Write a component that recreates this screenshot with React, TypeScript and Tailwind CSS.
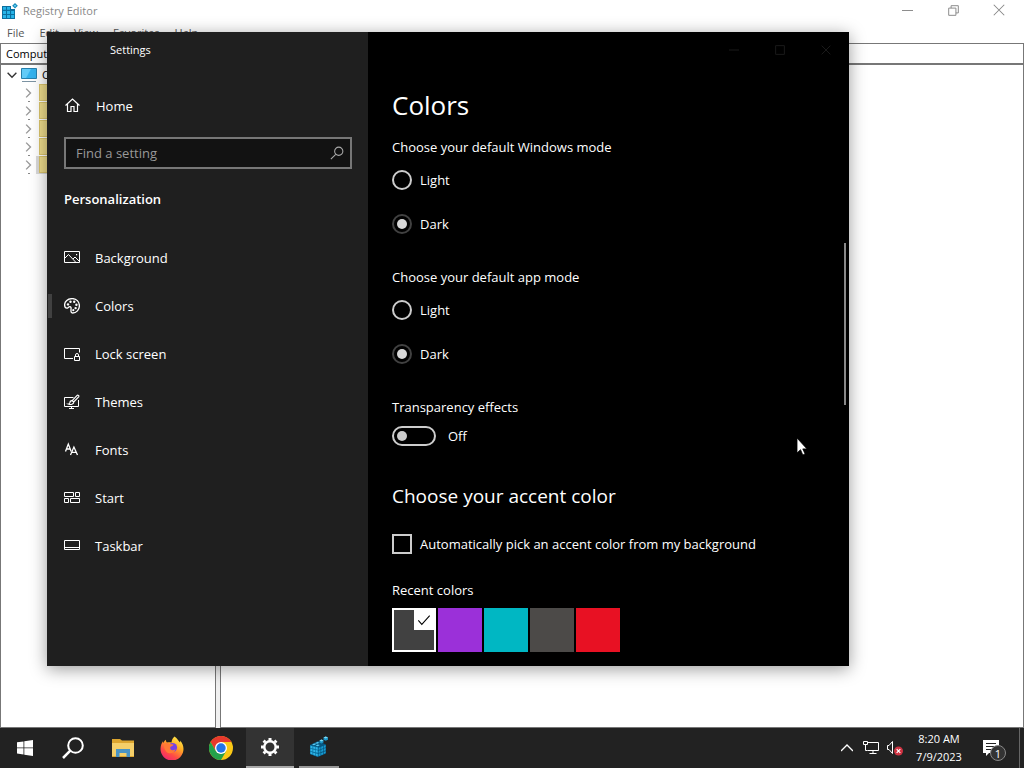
import { useState } from 'react'
import type { ReactNode } from 'react'

function Icon({ children, className = 'size-4' }: { children: ReactNode; className?: string }) {
  return (
    <svg
      viewBox="0 0 16 16"
      className={className}
      fill="none"
      stroke="currentColor"
      strokeWidth="1"
      aria-hidden="true"
    >
      {children}
    </svg>
  )
}

const navItems = [
  {
    label: 'Background',
    icon: (
      <>
        <path d="M.5 1.500h15v11H.5z" />
        <path d="M.5 8.500l4-4 7.500 8M9 9l2-2 4.500 4.500" />
        <path d="M12 4h1.200v1.200H12z" fill="currentColor" stroke="none" />
      </>
    ),
  },
  {
    label: 'Colors',
    icon: (
      <>
        <path
          d="M8.200.6C3.800.6.6 3.400.6 6.800c0 2 1 3.300 2.200 3.300 1.300 0 1.700-1.400 3-1.400 1.500 0 1.300 1.500 1.200 3-.1 1.700-.1 3.300 1.700 3.300 3.700 0 6.700-3.200 6.700-7.300S12.400.6 8.200.6z"
          strokeWidth="1.300"
        />
        <g fill="currentColor" stroke="none">
          <circle cx="4" cy="6.400" r="1.200" />
          <circle cx="6.500" cy="3.700" r="1.200" />
          <circle cx="10.200" cy="3.700" r="1.200" />
          <circle cx="12.400" cy="6.700" r="1.200" />
          <circle cx="11.600" cy="10.100" r="1.200" />
          <circle cx="9.300" cy="12.200" r="1.100" />
        </g>
      </>
    ),
  },
  {
    label: 'Lock screen',
    icon: (
      <>
        <path d="M9 12.500H.5v-10h15v4" />
        <path d="M10.500 10.500h5v4h-5z" />
        <path d="M11.500 10.500V9a1.500 1.500 0 0 1 3 0v1.500" />
      </>
    ),
  },
  {
    label: 'Themes',
    icon: (
      <>
        <path d="M9.500 3.500h-9v9h14V6M7.500 12.500v2M5 14.500h5" />
        <path
          d="M14.200 1.200c.8.300.9 1 .4 1.600L9.800 8 8.200 6.600l4.700-5c.4-.4.9-.6 1.300-.4zM8.200 6.700c-1.700-.2-2.200 1-2.300 2-.1.800-.7 1.200-1.600 1.300 2.600 1.100 5.400.3 5.500-2z"
          strokeWidth="1.200"
        />
      </>
    ),
  },
  {
    label: 'Fonts',
    icon: (
      <g strokeWidth="1.300">
        <path d="M1.500 9.500L4.300 2l2.900 7.500M2.500 7h3.600" />
        <path d="M6.500 13L9.900 5l3.600 8M7.800 10.300h4.400" />
      </g>
    ),
  },
  {
    label: 'Start',
    icon: (
      <>
        <path d="M.5 2.500h9v4h-9zM11.500 2.500h4v4h-4zM.5 8.500h4v4h-4zM6.500 8.500h9v4h-9z" />
      </>
    ),
  },
  {
    label: 'Taskbar',
    icon: (
      <>
        <path d="M.5 2.500h15v9H.5zM.5 9.500h15" />
      </>
    ),
  },
]

const recentColors = [
  { name: 'Dark gray', className: 'bg-[#414141]' },
  { name: 'Purple', className: 'bg-[#9b30d9]' },
  { name: 'Teal', className: 'bg-[#00b7c3]' },
  { name: 'Gray', className: 'bg-[#4c4a48]' },
  { name: 'Red', className: 'bg-[#e81123]' },
]

function RegistryIcon({ className }: { className: string }) {
  return (
    <svg viewBox="0 0 16 16" className={className} aria-hidden="true">
      <path d="M0 3h9v3h4v10H0z" fill="#0b6f9f" />
      <path
        d="M1 4h3v2.800H1zM5 4h3v2.800H5zM1 7.900h3v3H1zM5 7.900h3v3H5zM9.100 7.900h3v3h-3zM1 12h3v3H1zM5 12h3v3H5zM9.100 12h3v3h-3z"
        fill="#27b4e8"
      />
      <path d="M13 0l2.800 2.800L13 5.600l-2.800-2.800z" fill="#1487b8" />
      <path d="M13 1.500l1.300 1.300L13 4.100l-1.300-1.300z" fill="#63d2f5" />
    </svg>
  )
}

// larger cube version, used on the taskbar
function RegistryCube() {
  return (
    <svg viewBox="0 0 20 22" className="h-[22px] w-5" aria-hidden="true">
      <path d="M1 9l8-4 8 3.500v9L9 21l-8-3z" fill="#075680" />
      <path d="M1 9l8 2v10l-8-3z" fill="#0a709f" />
      <g fill="#2fb4e6">
        <path d="M1.500 9.800l2 .5v2.200l-2-.5zM4.200 10.400l2 .5v2.200l-2-.5zM6.800 11l1.900.5v2.200l-1.900-.5z" />
        <path d="M1.500 12.800l2 .5v2.200l-2-.5zM4.200 13.500l2 .5v2.200l-2-.5zM6.800 14.100l1.900.5v2.200l-1.900-.5z" />
        <path d="M1.500 15.800l2 .6v2l-2-.7zM4.200 16.700l2 .5v2.200l-2-.7zM6.800 17.400l1.900.5v2.300l-1.900-.7z" />
      </g>
      <g fill="#189bd0">
        <path d="M9.600 11.700l1.900-.7v2.200l-1.900.7zM12.200 10.800l1.900-.7v2.200l-1.900.7zM14.800 9.800l1.800-.7v2.200l-1.800.7z" />
        <path d="M9.600 14.700l1.900-.7v2.200l-1.900.7zM12.200 13.800l1.900-.7v2.200l-1.900.7zM14.800 12.800l1.800-.7v2.200l-1.800.7z" />
        <path d="M9.600 17.800l1.900-.7v2.300l-1.900.8zM12.200 16.900l1.900-.7v2.200l-1.900.7zM14.800 15.900l1.800-.7v1.900l-1.800.8z" />
        <path d="M3 8.600l2.200-1.100 2 .6L5 9.200zM6 7.200l2.500-1.100 2 .6-2.300 1.100zM6.500 9.600l2.300-1.100 2 .6-2 1.200z" fill="#5ccdf3" />
      </g>
      <path d="M10.500 4.500l2-1 2 1v2l-2 1-2-1z" fill="#1b94c6" />
      <path d="M10.500 4.500l2-1 2 1-2 1z" fill="#7ddcf8" />
      <path d="M14.500 1.500l2.200-1 2.300 1v2.300l-2.300 1-2.200-1z" fill="#1b94c6" />
      <path d="M14.500 1.500l2.200-1 2.300 1-2.300 1z" fill="#7ddcf8" />
    </svg>
  )
}

function RadioGroup({ title, name }: { title: string; name: string }) {
  return (
    <fieldset className="text-[13px] leading-5">
      <legend>{title}</legend>
      {['Light', 'Dark'].map((mode) => (
        <label key={mode} className="mt-[13px] flex w-fit items-center gap-2 last:mt-6">
          <input
            type="radio"
            name={name}
            defaultChecked={mode === 'Dark'}
            className="grid size-5 appearance-none place-items-center rounded-full border-2 border-[#ccc] before:size-[10px] before:rounded-full checked:border-[#414141] checked:before:bg-[#d8d8d8]"
          />
          {mode}
        </label>
      ))}
    </fieldset>
  )
}

function RegistryEditor() {
  return (
    <section className="flex min-h-0 flex-1 flex-col bg-white text-[11px] text-black" aria-label="Registry Editor">
      <header className="flex h-6 shrink-0 items-center pb-[2px] text-[#888]">
        <RegistryIcon className="ml-[2px] size-4" />
        <span className="ml-[5px] flex-1">Registry Editor</span>
        <div className="flex items-center pr-[2px] pb-[2px]">
          <button aria-label="Minimize" className="grid w-[45px] place-items-center">
            <Icon className="size-[11px]">
              <path d="M0 8h16" strokeWidth="1.400" />
            </Icon>
          </button>
          <button aria-label="Restore" className="grid w-[46px] place-items-center">
            <Icon className="size-[11px]">
              <path d="M1 4.500h10.500V15H1zM4.500 4.500V1H15v10.500h-3.500" strokeWidth="1.400" />
            </Icon>
          </button>
          <button aria-label="Close" className="grid w-[46px] place-items-center">
            <Icon className="size-3">
              <path d="M1 1l14 14M15 1L1 15" strokeWidth="1.400" />
            </Icon>
          </button>
        </div>
      </header>
      <nav className="flex h-[19px] shrink-0 items-center gap-[15px] pl-[7px] text-[#555]">
        <button>File</button>
        <button>Edit</button>
        <button>View</button>
        <button>Favorites</button>
        <button>Help</button>
      </nav>
      <input
        aria-label="Address"
        defaultValue="Computer"
        className="h-[21px] w-full shrink-0 border border-[#777] px-[5px] outline-none"
      />
      <div className="flex min-h-0 flex-1 bg-[#f0f0f0]">
        <ul className="w-[216px] border border-[#777] bg-white pt-px">
          <li className="flex h-[18px] items-center">
            <Icon className="ml-[6px] size-[10px] text-[#333]">
              <path d="M1 4.500l7 7 7-7" strokeWidth="2.200" />
            </Icon>
            <svg viewBox="0 0 16 14" className="ml-1 h-[14px] w-4" aria-hidden="true">
              <path d="M.5.5h15v10H.5z" fill="#35b3ee" stroke="#2780ad" />
              <path d="M1 1h9l-5 9H1z" fill="#63cbf7" />
              <path d="M1 13.500h14" stroke="#7c93a3" />
            </svg>
            <span className="ml-[5px]">Computer</span>
          </li>
          {[0, 1, 2, 3, 4].map((row) => (
            <li key={row} className="flex h-[18px] items-center">
              <div className="ml-[22px] flex h-full w-[13px] items-center bg-[radial-gradient(circle,#888_1px,transparent_1px)] bg-[length:2px_18px] bg-[position:5px_9px] bg-no-repeat">
                <Icon className="size-[10px] text-[#999]">
                  <path d="M5 1l7 7-7 7" strokeWidth="2.200" />
                </Icon>
              </div>
              <span className={row === 4 ? 'h-full bg-[#d9d9d9] pl-[3px]' : 'h-full pl-[3px]'}>
                <span className="block h-[17px] w-5 border border-[#dac46c] bg-[#eedc8b]" />
              </span>
            </li>
          ))}
        </ul>
        <div className="ml-1 flex-1 border border-[#777] bg-white" />
      </div>
    </section>
  )
}

function Sidebar() {
  return (
    <aside className="flex w-[321px] shrink-0 flex-col bg-[#1f1f1f] text-[13px] leading-5">
      <header className="flex h-9 items-center pl-[63px] text-[11px]">Settings</header>
      <a href="#home" className="mt-[14px] flex h-12 items-center gap-4 pl-[17px]">
        <Icon>
          <path d="M1.500 7.500l7-6.500 7 6.500M3.500 6v7.500H7v-5h3v5h3.500V6" strokeWidth="1.200" />
        </Icon>
        Home
      </a>
      <label className="mx-[17px] mt-[7px] mr-4 flex h-8 items-center border-2 border-[#777] bg-[#121212]">
        <input
          type="search"
          aria-label="Find a setting"
          placeholder="Find a setting"
          className="h-full min-w-0 flex-1 bg-transparent pl-[10px] outline-none placeholder:text-[#999]"
        />
        <Icon className="mr-[6px] size-[14px] text-[#aaa]">
          <circle cx="10" cy="6" r="4.700" strokeWidth="1.200" />
          <path d="M6.500 9.500L1 15" strokeWidth="1.200" />
        </Icon>
      </label>
      <h2 className="mt-5 pl-[17px] font-semibold">Personalization</h2>
      <nav className="mt-[25px]">
        {navItems.map((item) => (
          <a
            key={item.label}
            href={'#' + item.label}
            className="flex h-12 items-center pl-[1px]"
          >
            <span className={item.label === 'Colors' ? 'h-6 w-1 bg-[#414141]' : 'h-6 w-1'} />
            <Icon className="mr-[15px] ml-3 size-4">{item.icon}</Icon>
            {item.label}
          </a>
        ))}
      </nav>
    </aside>
  )
}

function SettingsWindow() {
  const [accent, setAccent] = useState('Dark gray')
  const [transparency, setTransparency] = useState(false)

  return (
    <section
      aria-label="Settings"
      className="absolute top-8 left-[47px] flex h-[634px] w-[802px] bg-black text-white shadow-[0_3px_16px_rgba(0,0,0,0.4)]"
    >
      <Sidebar />
      <main className="flex-1 pl-6 text-[13px] leading-5">
        <div className="flex h-9 items-center justify-end text-[#1a1a1a]">
          <button aria-label="Minimize" className="grid w-[46px] place-items-center">
            <Icon className="size-[10px]">
              <path d="M0 8h16" strokeWidth="1.600" />
            </Icon>
          </button>
          <button aria-label="Maximize" className="grid w-[46px] place-items-center">
            <Icon className="size-[10px]">
              <path d="M1 1h14v14H1z" strokeWidth="1.600" />
            </Icon>
          </button>
          <button aria-label="Close" className="grid w-[46px] place-items-center">
            <Icon className="size-[10px]">
              <path d="M1 1l14 14M15 1L1 15" strokeWidth="1.600" />
            </Icon>
          </button>
        </div>
        <h1 className="mt-[17px] mb-3 text-[26px] leading-10">Colors</h1>
        <RadioGroup title="Choose your default Windows mode" name="windows-mode" />
        <div className="mt-[33px]">
          <RadioGroup title="Choose your default app mode" name="app-mode" />
        </div>
        <p className="mt-[33px]">Transparency effects</p>
        <label className="mt-[9px] flex w-fit items-center gap-3">
          <input
            type="checkbox"
            role="switch"
            aria-label="Transparency effects"
            checked={transparency}
            onChange={(e) => setTransparency(e.target.checked)}
            className="flex h-5 w-11 appearance-none items-center rounded-full border-2 border-[#ccc] px-[3px] before:size-[10px] before:rounded-full before:bg-[#ccc] checked:justify-end"
          />
          {transparency ? 'On' : 'Off'}
        </label>
        <h2 className="mt-9 text-[19px] leading-7">Choose your accent color</h2>
        <label className="mt-6 flex w-fit items-center gap-2">
          <input
            type="checkbox"
            className="size-5 appearance-none border-2 border-[#ccc] checked:bg-[#414141]"
          />
          Automatically pick an accent color from my background
        </label>
        <h3 className="mt-[26px]">Recent colors</h3>
        <div className="mt-2 flex gap-[2px]">
          {recentColors.map((color) => (
            <button
              key={color.name}
              aria-label={color.name}
              aria-pressed={accent === color.name}
              onClick={() => setAccent(color.name)}
              className={
                'flex size-11 items-start justify-end aria-pressed:border-2 aria-pressed:border-white ' +
                color.className
              }
            >
              {accent === color.name && (
                <span className="grid size-5 place-items-center bg-white text-black">
                  <Icon className="size-[14px]">
                    <path d="M1.500 8.500l4 4.500L14.500 3" strokeWidth="1.200" />
                  </Icon>
                </span>
              )}
            </button>
          ))}
        </div>
      </main>
      <div className="absolute top-[211px] right-[3px] h-[162px] w-[2px] bg-[#888]" />
    </section>
  )
}

function Gear() {
  return (
    <svg viewBox="0 0 20 20" className="size-5" fill="none" stroke="#fff" aria-hidden="true">
      <circle cx="10" cy="10" r="5.700" strokeWidth="2.400" />
      <path
        d="M10 1v3M10 16v3M1 10h3M16 10h3M3.600 3.600l1.600 1.600M14.800 14.800l1.600 1.600M16.400 3.600l-1.600 1.600M5.200 14.800l-1.600 1.600"
        strokeWidth="3"
      />
    </svg>
  )
}

function Firefox() {
  return (
    <svg viewBox="0 0 24 24" className="size-6" aria-hidden="true">
      <defs>
        <linearGradient id="fox" x1="0.800" y1="0" x2="0.200" y2="1">
          <stop offset="0" stopColor="#fff14f" />
          <stop offset="0.350" stopColor="#ffad24" />
          <stop offset="0.700" stopColor="#ff4b45" />
          <stop offset="1" stopColor="#ec2276" />
        </linearGradient>
      </defs>
      <path
        d="M14.500.5c3 2 3.500 4 5.500 6 .3-.7.300-1.200.2-1.900 2.100 2.400 3.300 5.400 3.300 8.400A11.500 11.500 0 0 1 .5 13C.5 9.700 1.600 7 3 5.200c0 .700.1 1.300.4 1.700.7-1.600 1.500-2.500 2.400-3.200 0 1.200.5 2.100 1.200 2.700 1.400-.4 3-.3 4.500.2.200-2.500 1.300-4.800 3-6.100z"
        fill="url(#fox)"
      />
      <circle cx="12.500" cy="11.500" r="4.600" fill="#7542e5" />
      <path
        d="M4.500 7.500c2-.9 4-.5 5.500.5l3.500.5c-.2 1.600-2.300 1.700-3.200 2.500-.8 2.900 2.400 4.500 5.200 2.300-1 4.300-6.500 5.200-9.200 2.400C4.200 13.500 3.500 10.200 4.500 7.500z"
        fill="#ff7a35"
      />
    </svg>
  )
}

function Chrome() {
  return (
    <svg viewBox="0 0 24 24" className="size-6" aria-hidden="true">
      <circle cx="12" cy="12" r="12" fill="#fbc816" />
      <path d="M12 6h10.400A12 12 0 0 0 1.600 6l5.200 9z" fill="#e8392d" />
      <path d="M1.600 6A12 12 0 0 0 12 24l5.200-9-5.200 3-5.200-3z" fill="#24a14b" />
      <circle cx="12" cy="12" r="6" fill="#fff" />
      <circle cx="12" cy="12" r="4.700" fill="#2475e8" />
    </svg>
  )
}

function Taskbar() {
  return (
    <footer className="flex h-10 shrink-0 items-stretch bg-[#222] text-white">
      <div className="flex flex-1 gap-px pl-px">
        <button aria-label="Start" className="grid w-12 place-items-center">
          <svg viewBox="0 0 16 16" className="size-4" fill="#fff" aria-hidden="true">
            <path d="M0 2.300L6.500 1.400v6.100H0zM7.300 1.300L16 0v7.500H7.300zM0 8.300h6.500v6.200L0 13.600zM7.300 8.300H16V16l-8.700-1.300z" />
          </svg>
        </button>
        <button aria-label="Search" className="grid w-12 place-items-center pr-[3px]">
          <svg viewBox="0 0 22 22" className="size-[22px]" fill="none" stroke="#fff" strokeWidth="2" aria-hidden="true">
            <circle cx="13.500" cy="8.500" r="7.300" />
            <path d="M8.300 13.700L1 21" strokeWidth="2.500" />
          </svg>
        </button>
        <button aria-label="File Explorer" className="grid w-12 place-items-center">
          <svg viewBox="0 0 22 18" className="h-[18px] w-[22px]" aria-hidden="true">
            <path d="M0 0h8l2 1.500h12V18H0z" fill="#dca52f" />
            <path d="M0 4h22v13H0z" fill="#f5cf69" />
            <path d="M4 10h14v8h-3.500v-4h-7v4H4z" fill="#4a94c4" />
          </svg>
        </button>
        <button aria-label="Firefox" className="grid w-12 place-items-center">
          <Firefox />
        </button>
        <button aria-label="Chrome" className="grid w-12 place-items-center">
          <Chrome />
        </button>
        <button
          aria-label="Settings"
          className="grid w-12 place-items-center border-b-2 border-[#aaa] bg-[#333]"
        >
          <Gear />
        </button>
        <button aria-label="Registry Editor" className="grid w-12 place-items-center px-1">
          <span className="grid h-10 w-10 place-items-center border-b-2 border-[#999]">
            <RegistryCube />
          </span>
        </button>
      </div>
      <div className="flex items-center">
        <button aria-label="Show hidden icons" className="grid w-6 place-items-center">
          <Icon className="size-3">
            <path d="M0 12l8-8 8 8" strokeWidth="1.800" />
          </Icon>
        </button>
        <button aria-label="Network" className="grid w-6 place-items-center">
          <Icon>
            <path d="M4.500 2.500h11v8h-11M10 10.500v3M6.500 13.500h7M.5 1.500h4v3h-4zM2.500 4.500v6h2" />
          </Icon>
        </button>
        <button aria-label="Volume muted" className="grid w-6 place-items-center">
          <Icon>
            <path d="M.5 5.500H2l3.500-4v12L2 9.500H.5z" />
            <circle cx="11.500" cy="11" r="4.500" fill="#cf3342" stroke="none" />
            <path d="M9.700 9.200l3.600 3.600M13.300 9.200l-3.600 3.600" strokeWidth="1.200" />
          </Icon>
        </button>
        <time className="w-16 text-center text-[11px] leading-[18px]">
          8:20 AM
          <br />
          7/9/2023
        </time>
        <button aria-label="1 notification" className="relative grid w-10 place-items-center">
          <Icon>
            <path d="M0 0h16v13H6l-3 3v-3H0z" fill="#fff" stroke="none" />
            <path d="M3 3.500h10M3 6.500h10M3 9.500h7" stroke="#222" />
          </Icon>
          <span className="absolute top-[5px] left-[19px] grid size-4 place-items-center rounded-full border border-[#888] bg-[#333] text-[11px] leading-none">
            1
          </span>
        </button>
        <button aria-label="Show desktop" className="ml-2 h-full w-[5px] border-l border-[#666]" />
      </div>
    </footer>
  )
}

export default function App() {
  return (
    <div className="relative flex h-screen flex-col overflow-hidden font-['Open_Sans',sans-serif]">
      <RegistryEditor />
      <SettingsWindow />
      <Taskbar />
      <svg viewBox="0 0 12 19" className="absolute top-[437px] left-[796px] h-[19px] w-3" aria-hidden="true">
        <path
          d="M1 1v15l3.500-3.300 2.300 5.300 2.300-1-2.300-5.100H11z"
          fill="#fff"
          stroke="#000"
          strokeWidth="0.800"
        />
      </svg>
    </div>
  )
}
